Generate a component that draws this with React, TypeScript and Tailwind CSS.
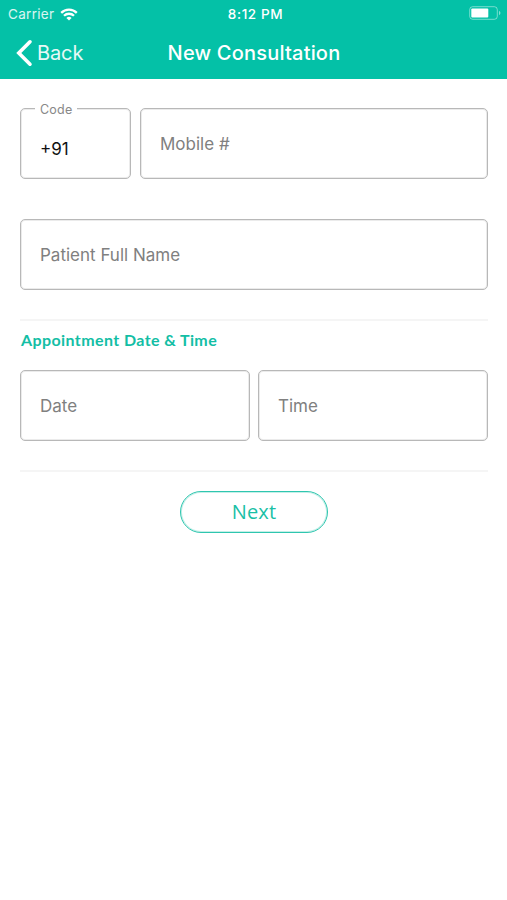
import type { ReactNode } from 'react';

export default function App() {
  return (
    <div className="flex h-[900px] w-[507px] flex-col bg-white font-['Inter',sans-serif]">
      <header className="h-[79px] bg-[#04c1a7] text-white">
        <StatusBar />
        <NavBar title="New Consultation" />
      </header>

      <main className="flex flex-col pt-[29px] pr-[19px] pl-5">
        <div className="flex gap-[9px]">
          <CodeField value="+91" />
          <Field className="flex-1">Mobile #</Field>
        </div>

        <Field className="mt-10">Patient Full Name</Field>

        <Divider />

        <h2 className="mt-[7px] h-6 pl-px font-['Lato',sans-serif] text-[16px] leading-6 font-bold tracking-[0.4px] text-[#13bea5]">
          Appointment Date &amp; Time
        </h2>

        <div className="mt-[18px] flex gap-2">
          <Field className="flex-1">Date</Field>
          <Field className="flex-1">Time</Field>
        </div>

        <Divider />

        <button className="mt-[19px] ml-40 flex h-[42px] w-[148px] items-center justify-center rounded-full border border-[#2fc6af] font-['Open_Sans',sans-serif] text-[20px] tracking-[0.2px] text-[#1abfa6] shadow-[inset_0_0_0_1px_#c5efe8]">
          Next
        </button>
      </main>
    </div>
  );
}

function StatusBar() {
  return (
    <div className="grid h-7 grid-cols-3 items-center pr-[6px] pl-2 text-[13.5px]">
      <div className="flex items-center gap-[6px]">
        <span className="tracking-[0.3px] text-white/85">Carrier</span>
        <WifiIcon />
      </div>
      <span className="pl-[2px] text-center font-medium tracking-[0.6px]">8:12 PM</span>
      <div className="flex justify-end pb-[2px]">
        <BatteryIcon />
      </div>
    </div>
  );
}

function NavBar({ title }: { title: string }) {
  return (
    <div className="grid h-[49px] grid-cols-[150px_1fr_150px] items-center">
      <button className="flex items-center gap-1 pl-4 text-[20px] tracking-[-0.1px] text-white/90">
        <svg width="17" height="28" viewBox="0 0 17 28" fill="none" stroke="white" strokeWidth="3.6" strokeLinecap="round">
          <path d="M14 2.8 2.8 14 14 25.2" />
        </svg>
        Back
      </button>
      <h1 className="pl-px text-center text-[20px] font-medium tracking-[0.2px] whitespace-nowrap">{title}</h1>
    </div>
  );
}

function Field({ className, children }: { className: string; children: ReactNode }) {
  return (
    <div
      className={`flex h-[71px] items-center rounded-[5px] border border-[#b8b8b8] pt-[2px] pl-[19px] text-[17px] text-[#808080] shadow-[inset_0_0_0_1px_#ebebeb] ${className}`}
    >
      {children}
    </div>
  );
}

function CodeField({ value }: { value: string }) {
  return (
    <div className="relative flex h-[71px] w-[111px] items-center rounded-[5px] border border-[#b8b8b8] pt-3 pl-[19px] text-[17px] text-[#111] shadow-[inset_0_0_0_1px_#ebebeb]">
      <span className="absolute -top-2 left-[14px] bg-white px-[5px] text-[12.5px] leading-[17px] tracking-[0.2px] text-[#888]">
        Code
      </span>
      {value}
    </div>
  );
}

function Divider() {
  return <div className="mt-[29px] h-[2px] bg-[#f5f5f5]" />;
}

function WifiIcon() {
  return (
    <svg width="18" height="13" viewBox="0 0 18 13" fill="none" stroke="white" strokeWidth="2.3">
      <path d="M1.2 4.9a11 11 0 0 1 15.6 0" />
      <path d="M4 7.8a7.1 7.1 0 0 1 10 0" />
      <path d="M9 12.6 6.4 10a3.7 3.7 0 0 1 5.2 0Z" fill="white" stroke="none" />
    </svg>
  );
}

function BatteryIcon() {
  return (
    <svg width="32" height="14" viewBox="0 0 32 14" fill="none">
      <rect x="0.7" y="0.7" width="27.6" height="12.6" rx="3" stroke="white" strokeOpacity="0.45" />
      <rect x="2.3" y="2.6" width="17" height="8.8" rx="1" fill="white" />
      <path d="M30 5v4c1-.4 1.4-1.1 1.4-2S31 5.4 30 5Z" fill="white" fillOpacity="0.5" />
    </svg>
  );
}
